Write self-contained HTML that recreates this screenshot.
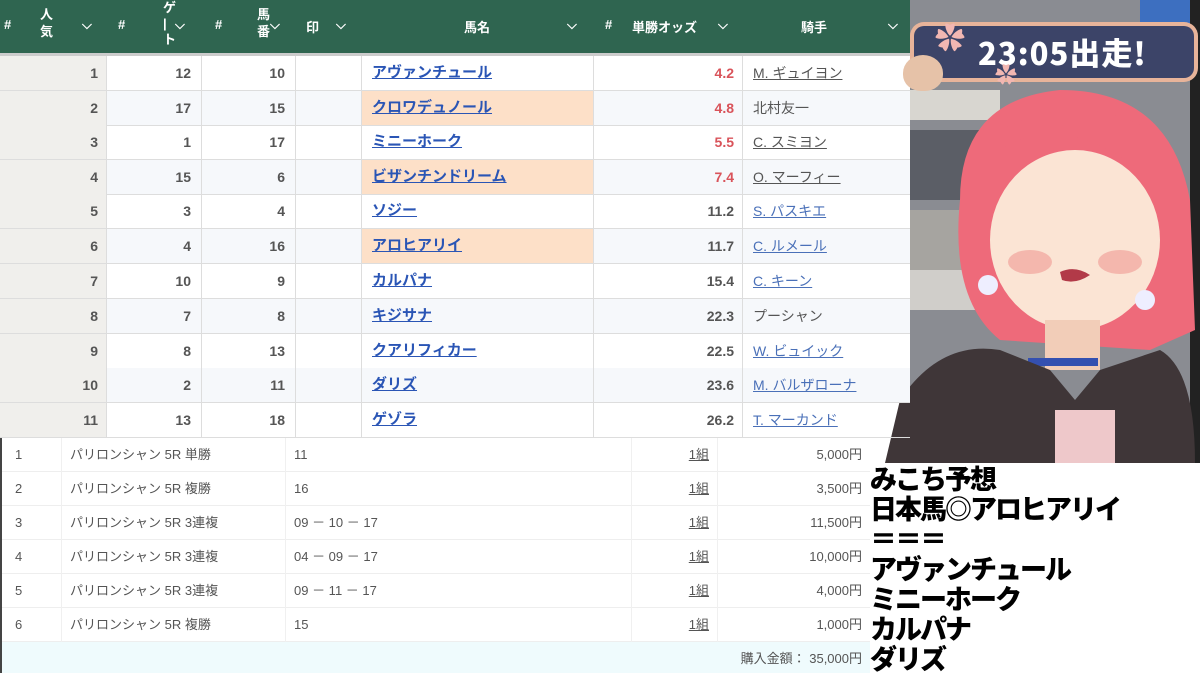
<!DOCTYPE html>
<html><head><meta charset="utf-8"><style>
*{margin:0;padding:0;box-sizing:border-box}
body{width:1200px;height:673px;overflow:hidden;background:#fff;position:relative;font-family:"Liberation Sans","Noto Sans CJK JP",sans-serif}
.a{position:absolute}
.hd{left:0;top:0;width:910px;height:53px;background:#2f6550;color:#fff;font-weight:bold;font-size:13px}
.hd span{position:absolute}
.row{position:absolute;left:0;width:910px;height:35px;border-bottom:1px solid #ddd;font-size:14px;font-weight:bold;color:#555}
.row div{position:absolute;top:0;height:34px;line-height:34px;border-right:1px solid #ddd}
.c1{left:0;width:107px;background:#f0efec;text-align:right;padding-right:8px}
.c2{left:107px;width:95px;text-align:right;padding-right:10px}
.c3{left:202px;width:94px;text-align:right;padding-right:10px}
.c4{left:296px;width:66px}
.c5{left:362px;width:232px;padding-left:10px;color:#2a55b5;text-decoration:underline;font-size:15px}
.c6{left:594px;width:149px;text-align:right;padding-right:8px}
.c7{left:743px;width:167px;padding-left:10px;font-weight:normal;border-right:none!important}
.alt{background:#f6f8fb}
.or{background:#fde0c8}
.red{color:#d9535a}
.g{color:#555;text-decoration:underline}
.b{color:#4a70b8;text-decoration:underline}
.br{position:absolute;left:0;width:870px;height:34px;border-bottom:1px solid #eee;font-size:13px;color:#555;background:#fff}
.br div{position:absolute;top:0;height:34px;line-height:34px;border-right:1px solid #f0f0f0}
.d1{left:0;width:62px;padding-left:15px}
.d2{left:62px;width:224px;padding-left:8px}
.d3{left:286px;width:346px;padding-left:8px}
.d4{left:632px;width:86px;text-align:right;padding-right:8px;text-decoration:underline}
.d5{left:718px;width:152px;text-align:right;padding-right:8px;border-right:none!important}
.big{font-weight:900;font-size:27px;line-height:30px;color:#000;letter-spacing:-2px;font-family:"Noto Sans CJK JP",sans-serif}
</style></head><body>
<!-- character area -->
<svg class="a" style="left:880px;top:0" width="320" height="463" viewBox="880 0 320 463">
<rect x="910" y="0" width="290" height="463" fill="#8a8c92"/>
<rect x="1140" y="0" width="60" height="40" fill="#3d6fc0"/>
<rect x="910" y="90" width="90" height="30" fill="#d8d6d0"/>
<rect x="910" y="130" width="80" height="70" fill="#5b5e66"/>
<rect x="910" y="210" width="80" height="60" fill="#a6a4a0"/>
<rect x="910" y="270" width="80" height="40" fill="#d0ceca"/>
<rect x="1190" y="0" width="10" height="463" fill="#222"/>
<path d="M960 200 Q960 100 1060 90 Q1170 90 1190 200 L1195 330 L1150 350 L1000 340 Q950 300 960 200Z" fill="#ee6a7a"/>
<ellipse cx="1075" cy="240" rx="85" ry="90" fill="#fbe4d4"/>
<path d="M1000 150 Q1060 110 1140 170 L1150 130 Q1080 90 1000 130Z" fill="#ee6a7a"/>
<rect x="1045" y="320" width="55" height="50" fill="#f2cdb8"/>
<ellipse cx="1030" cy="262" rx="22" ry="12" fill="#f4b7ad"/>
<ellipse cx="1120" cy="262" rx="22" ry="12" fill="#f4b7ad"/>
<path d="M1060 272 Q1075 265 1090 275 Q1075 285 1062 280Z" fill="#b23a48"/>
<rect x="1028" y="358" width="70" height="8" fill="#3450b0"/>
<path d="M885 463 L900 400 Q940 340 1000 350 L1050 370 L1075 400 L1100 370 L1160 350 Q1195 370 1195 463Z" fill="#3f3638"/>
<rect x="1055" y="410" width="60" height="53" fill="#eec8ca"/>
<circle cx="988" cy="285" r="10" fill="#eef"/>
<circle cx="1145" cy="300" r="10" fill="#eef"/>
</svg>

<div class="a hd">
<span style="left:4px;top:17px">#</span>
<span style="left:40px;top:6px;line-height:17px">人<br>気</span>
<span style="left:82px;top:17px">⌵</span>
<span style="left:118px;top:17px">#</span>
<span style="left:163px;top:0;line-height:16px">ゲ<br>|<br>ト</span>
<span style="left:175px;top:17px">⌵</span>
<span style="left:215px;top:17px">#</span>
<span style="left:257px;top:6px;line-height:17px">馬<br>番</span>
<span style="left:270px;top:17px">⌵</span>
<span style="left:306px;top:17px">印</span>
<span style="left:336px;top:17px">⌵</span>
<span style="left:464px;top:17px">馬名</span>
<span style="left:567px;top:17px">⌵</span>
<span style="left:605px;top:17px">#</span>
<span style="left:632px;top:17px">単勝オッズ</span>
<span style="left:718px;top:17px">⌵</span>
<span style="left:801px;top:17px">騎手</span>
<span style="left:888px;top:17px">⌵</span>
</div>
<div class="a" style="left:0;top:53px;width:910px;height:3px;background:#ccc"></div>

<div class="row" style="top:56px"><div class="c1">1</div><div class="c2">12</div><div class="c3">10</div><div class="c4"></div><div class="c5">アヴァンチュール</div><div class="c6 red">4.2</div><div class="c7 g">M. ギュイヨン</div></div>
<div class="row alt" style="top:91px"><div class="c1">2</div><div class="c2">17</div><div class="c3">15</div><div class="c4"></div><div class="c5 or">クロワデュノール</div><div class="c6 red">4.8</div><div class="c7" style="color:#555">北村友一</div></div>
<div class="row" style="top:125px"><div class="c1">3</div><div class="c2">1</div><div class="c3">17</div><div class="c4"></div><div class="c5">ミニーホーク</div><div class="c6 red">5.5</div><div class="c7 g">C. スミヨン</div></div>
<div class="row alt" style="top:160px"><div class="c1">4</div><div class="c2">15</div><div class="c3">6</div><div class="c4"></div><div class="c5 or">ビザンチンドリーム</div><div class="c6 red">7.4</div><div class="c7 g">O. マーフィー</div></div>
<div class="row" style="top:194px"><div class="c1">5</div><div class="c2">3</div><div class="c3">4</div><div class="c4"></div><div class="c5">ソジー</div><div class="c6">11.2</div><div class="c7 b">S. パスキエ</div></div>
<div class="row alt" style="top:229px"><div class="c1">6</div><div class="c2">4</div><div class="c3">16</div><div class="c4"></div><div class="c5 or">アロヒアリイ</div><div class="c6">11.7</div><div class="c7 b">C. ルメール</div></div>
<div class="row" style="top:264px"><div class="c1">7</div><div class="c2">10</div><div class="c3">9</div><div class="c4"></div><div class="c5">カルパナ</div><div class="c6">15.4</div><div class="c7 b">C. キーン</div></div>
<div class="row alt" style="top:299px"><div class="c1">8</div><div class="c2">7</div><div class="c3">8</div><div class="c4"></div><div class="c5">キジサナ</div><div class="c6">22.3</div><div class="c7" style="color:#555">プーシャン</div></div>
<div class="row" style="top:334px"><div class="c1">9</div><div class="c2">8</div><div class="c3">13</div><div class="c4"></div><div class="c5">クアリフィカー</div><div class="c6">22.5</div><div class="c7 b">W. ビュイック</div></div>
<div class="row alt" style="top:368px"><div class="c1">10</div><div class="c2">2</div><div class="c3">11</div><div class="c4"></div><div class="c5">ダリズ</div><div class="c6">23.6</div><div class="c7 b">M. バルザローナ</div></div>
<div class="row" style="top:403px"><div class="c1">11</div><div class="c2">13</div><div class="c3">18</div><div class="c4"></div><div class="c5">ゲゾラ</div><div class="c6">26.2</div><div class="c7 b">T. マーカンド</div></div>

<div class="br" style="top:438px"><div class="d1">1</div><div class="d2">パリロンシャン 5R 単勝</div><div class="d3">11</div><div class="d4">1組</div><div class="d5">5,000円</div></div>
<div class="br" style="top:472px"><div class="d1">2</div><div class="d2">パリロンシャン 5R 複勝</div><div class="d3">16</div><div class="d4">1組</div><div class="d5">3,500円</div></div>
<div class="br" style="top:506px"><div class="d1">3</div><div class="d2">パリロンシャン 5R 3連複</div><div class="d3">09 － 10 － 17</div><div class="d4">1組</div><div class="d5">11,500円</div></div>
<div class="br" style="top:540px"><div class="d1">4</div><div class="d2">パリロンシャン 5R 3連複</div><div class="d3">04 － 09 － 17</div><div class="d4">1組</div><div class="d5">10,000円</div></div>
<div class="br" style="top:574px"><div class="d1">5</div><div class="d2">パリロンシャン 5R 3連複</div><div class="d3">09 － 11 － 17</div><div class="d4">1組</div><div class="d5">4,000円</div></div>
<div class="br" style="top:608px"><div class="d1">6</div><div class="d2">パリロンシャン 5R 複勝</div><div class="d3">15</div><div class="d4">1組</div><div class="d5">1,000円</div></div>
<div class="a" style="left:0;top:642px;width:870px;height:31px;background:#effbfd;font-size:13px;color:#555;text-align:right;padding-right:8px;line-height:34px">購入金額： 35,000円</div>
<div class="a" style="left:0;top:438px;width:2px;height:235px;background:#444"></div>

<!-- timer badge -->
<div class="a" style="left:910px;top:22px;width:288px;height:60px;border-radius:14px;background:#e8b49a;padding:4px"><div style="width:100%;height:100%;border-radius:10px;background:#3c4468"></div></div>
<div class="a" style="left:978px;top:30px;font-size:31px;font-weight:900;color:#fff;font-family:'Noto Sans CJK JP',sans-serif;letter-spacing:1px;line-height:44px">23:05出走!</div>
<div class="a" style="left:903px;top:55px;width:40px;height:36px;border-radius:50% 50% 45% 45%;background:#e6c2a8"></div>
<div class="a" style="left:935px;top:25px;color:#f2b7b2;font-size:30px;line-height:30px">✿</div>
<div class="a" style="left:995px;top:65px;color:#f2b7b2;font-size:22px;line-height:22px">✿</div>

<div class="a" style="left:870px;top:463px;width:330px;height:210px;background:#fff"></div>
<div class="a big" style="left:870px;top:463px">みこち予想<br>日本馬◎アロヒアリイ<br>＝＝＝<br>アヴァンチュール<br>ミニーホーク<br>カルパナ<br>ダリズ</div>
</body></html>
